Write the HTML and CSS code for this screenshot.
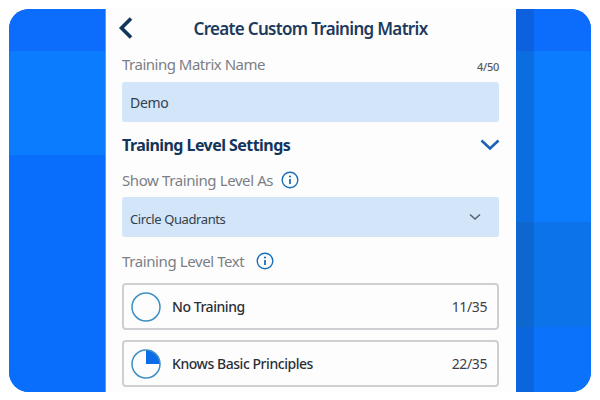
FILE: index.html
```html
<!DOCTYPE html>
<html lang="en">
<head>
    <meta charset="UTF-8">
    <title>Create Custom Training Matrix</title>
    <link rel="stylesheet" href="styles.css">
</head>
<body>

<div class="frame">
    <div class="side side-left">
        <div class="band band-top"></div>
        <div class="band band-light"></div>
        <div class="band band-fill"></div>
    </div>

    <div class="panel">
        <div class="header">
            <svg class="back" width="16" height="24" viewBox="0 0 16 24"><path d="M13 2.500 3.500 12 13 21.500" fill="none" stroke="#12355b" stroke-width="3.600"/></svg>
            <h1>Create Custom Training Matrix</h1>
        </div>

        <div class="label-row name-row">
            <span class="label">Training Matrix Name</span>
            <span class="count">4/50</span>
        </div>
        <div class="field">Demo</div>

        <div class="section-row">
            <h2>Training Level Settings</h2>
            <svg class="section-arrow" width="20" height="12" viewBox="0 0 20 12"><path d="M1.500 1.500 10 9.500 18.500 1.500" fill="none" stroke="#1a62b4" stroke-width="2.600"/></svg>
        </div>

        <div class="label-row as-row">
            <span class="label">Show Training Level As</span>
            <svg class="info" width="18" height="18" viewBox="0 0 18 18"><circle cx="9" cy="9" r="7.800" fill="none" stroke="#1a6fb8" stroke-width="1.400"/><circle cx="9" cy="5.500" r="1.100" fill="#1a6fb8"/><path d="M9 8v5" stroke="#1a6fb8" stroke-width="1.800"/></svg>
        </div>
        <div class="field select">
            <span class="select-text">Circle Quadrants</span>
            <svg width="12" height="8" viewBox="0 0 12 8"><path d="M1 1.500 6 6l5-4.500" fill="none" stroke="#56616e" stroke-width="1.500"/></svg>
        </div>

        <div class="label-row text-row">
            <span class="label">Training Level Text</span>
            <svg class="info" width="18" height="18" viewBox="0 0 18 18"><circle cx="9" cy="9" r="7.800" fill="none" stroke="#1a6fb8" stroke-width="1.400"/><circle cx="9" cy="5.500" r="1.100" fill="#1a6fb8"/><path d="M9 8v5" stroke="#1a6fb8" stroke-width="1.800"/></svg>
        </div>

        <div class="level">
            <svg width="30" height="30" viewBox="0 0 30 30"><circle cx="15" cy="15" r="14" fill="none" stroke="#3d8fc4" stroke-width="1.500"/></svg>
            <span class="level-name">No Training</span>
            <span class="level-count">11/35</span>
        </div>
        <div class="level">
            <svg width="30" height="30" viewBox="0 0 30 30"><path d="M15 15V1a14 14 0 0 1 14 14z" fill="#0b6be8"/><circle cx="15" cy="15" r="14" fill="none" stroke="#3d8fc4" stroke-width="1.500"/></svg>
            <span class="level-name">Knows Basic Principles</span>
            <span class="level-count">22/35</span>
        </div>
    </div>

    <div class="side side-right">
        <div class="band band-top"></div>
        <div class="band band-light"></div>
        <div class="band band-mid"></div>
        <div class="band band-fill"></div>
    </div>
</div>

</body>
</html>
```

FILE: styles.css
```css
html, body {
    margin: 0;
    height: 100%;
    background: white;
}

body {
    font-family: "Noto Sans", sans-serif;
    padding: 9px;
    box-sizing: border-box;
    width: 600px;
    height: 400px;
    overflow: hidden;
}

.frame {
    display: flex;
    width: 582px;
    height: 383px;
    border-radius: 20px;
    overflow: hidden;
    background: #0a6ff8;
}

.side {
    display: flex;
    flex-direction: column;
}

.side-left {
    width: 96px;
}

.side-right {
    width: 75px;
    position: relative;
}

/* darker strip next to the panel */
.side-right::before {
    content: "";
    position: absolute;
    top: 0;
    bottom: 0;
    left: 0;
    width: 18px;
    background: rgba(20, 60, 120, 0.22);
}

.band-top {
    height: 42px;
    background: #0c6cfb;
}

.band-light {
    background: #0a7cfd;
}

.side-left .band-light {
    height: 104px;
}

.side-right .band-light {
    height: 171px;
}

.band-mid {
    height: 105px;
    background: #0d73e8;
}

.band-fill {
    flex: 1;
    background: #0a6efc;
}

.side-right .band-fill {
    background: #0a72fb;
}

.panel {
    width: 411px;
    flex-shrink: 0;
    box-sizing: border-box;
    padding: 0 17px 0 16px;
    background: #fefdfe;
    border-left: 1px solid #5c9ce0;
    overflow: hidden;
}

.header {
    position: relative;
    height: 38px;
    display: flex;
    align-items: center;
    justify-content: center;
}

.back {
    position: absolute;
    left: -4px;
    top: 7px;
}

h1 {
    margin: 0;
    font-size: 17px;
    font-weight: 600;
    letter-spacing: -0.68px;
    color: #1c3a5c;
}

.label-row {
    display: flex;
    align-items: center;
}

.label {
    font-size: 15px;
    letter-spacing: -0.4px;
    color: #7b7f85;
}

.name-row {
    justify-content: space-between;
    height: 33px;
    padding-bottom: 2px;
}

.name-row .label {
    letter-spacing: -0.5px;
}

.count {
    font-size: 11px;
    font-weight: 500;
    letter-spacing: -0.3px;
    color: #555a60;
    padding-top: 6px;
}

.field {
    height: 40px;
    box-sizing: border-box;
    padding: 0 8px;
    display: flex;
    align-items: center;
    background: #d2e5f9;
    border-radius: 3px;
    font-size: 14px;
    letter-spacing: -0.3px;
    color: #33404e;
}

.select {
    justify-content: space-between;
    font-size: 13px;
    padding-right: 18px;
}

.select-text {
    padding-top: 3px;
    letter-spacing: -0.4px;
}

.section-row {
    display: flex;
    align-items: center;
    justify-content: space-between;
    height: 46px;
}

.section-arrow {
    margin-right: -1px;
}

h2 {
    margin: 0;
    font-size: 16px;
    font-weight: 700;
    letter-spacing: -0.55px;
    color: #12355b;
}

.as-row {
    gap: 8px;
    height: 24px;
    margin-bottom: 5px;
}

.text-row {
    gap: 12px;
    height: 44px;
    padding-top: 2px;
}

.level {
    display: flex;
    align-items: center;
    height: 47px;
    box-sizing: border-box;
    padding: 0 10px 0 7px;
    margin-bottom: 10px;
    border: 2px solid #cfcfd3;
    border-radius: 4px;
    background: #fefdfe;
}

.level-name {
    flex: 1;
    margin-left: 11px;
    font-size: 14px;
    font-weight: 500;
    letter-spacing: -0.45px;
    color: #2b2f36;
}

.level-count {
    font-size: 14px;
    letter-spacing: -0.4px;
    color: #3c4048;
}
```
